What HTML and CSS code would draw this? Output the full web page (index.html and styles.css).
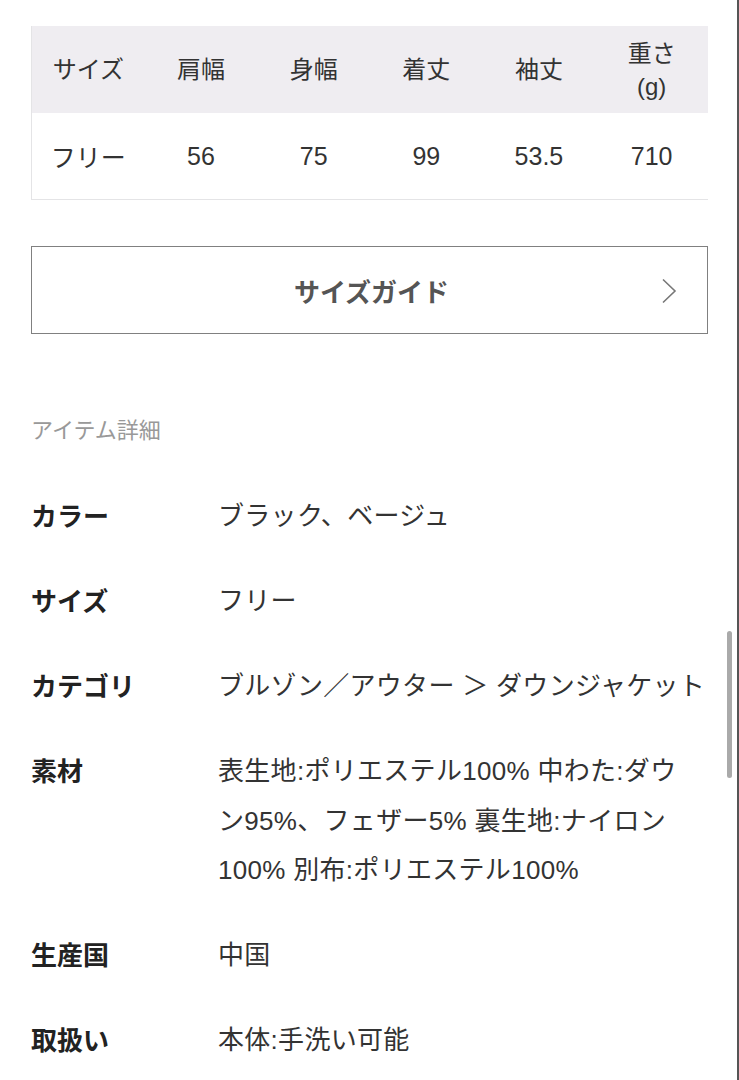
FILE: index.html
```html
<!DOCTYPE html>
<html lang="ja">
<head>
<meta charset="utf-8">
<meta name="viewport" content="width=device-width, initial-scale=1.0">
<title>アイテム詳細</title>
<link rel="stylesheet" href="styles.css">
</head>
<body>
<div id="wrapper">
  <div class="sizeTable">
    <table>
      <thead>
        <tr>
          <th>サイズ</th>
          <th>肩幅</th>
          <th>身幅</th>
          <th>着丈</th>
          <th>袖丈</th>
          <th>重さ<br>(g)</th>
        </tr>
      </thead>
      <tbody>
        <tr>
          <td>フリー</td>
          <td>56</td>
          <td>75</td>
          <td>99</td>
          <td>53.5</td>
          <td>710</td>
        </tr>
      </tbody>
    </table>
  </div>

  <a class="btnGuide" href="#">
    <span>サイズガイド</span>
    <svg class="arrow" width="16" height="26" viewBox="0 0 16 26">
      <path d="M2 1.5 L14 13 L2 24.5" fill="none" stroke="#777" stroke-width="1.6"/>
    </svg>
  </a>

  <h2 class="detailTitle">アイテム詳細</h2>

  <dl class="detailList">
    <div class="detailRow">
      <dt>カラー</dt>
      <dd>ブラック、ベージュ</dd>
    </div>
    <div class="detailRow">
      <dt>サイズ</dt>
      <dd>フリー</dd>
    </div>
    <div class="detailRow">
      <dt>カテゴリ</dt>
      <dd>ブルゾン／アウター ＞ ダウンジャケット</dd>
    </div>
    <div class="detailRow">
      <dt>素材</dt>
      <dd>表生地:ポリエステル100% 中わた:ダウ<br>ン95%、フェザー5% 裏生地:ナイロン<br>100% 別布:ポリエステル100%</dd>
    </div>
    <div class="detailRow">
      <dt>生産国</dt>
      <dd>中国</dd>
    </div>
    <div class="detailRow">
      <dt>取扱い</dt>
      <dd>本体:手洗い可能</dd>
    </div>
  </dl>
</div>
<div class="scrollBar"></div>
</body>
</html>
```

FILE: styles.css
```css
html,body {
  margin: 0;
  padding: 0;
  background: #fff;
  font-family: "Liberation Sans", "Noto Sans CJK JP", sans-serif;
  color: #333;
}
body {
  border-right: 2px solid #555;
  min-height: 1080px;
  box-sizing: border-box;
  overflow: hidden;
}
#wrapper {
  padding: 26px 29px 0 31px;
}
/* サイズ表 */
.sizeTable {
  border-left: 1px solid #e4e4e6;
  border-bottom: 1px solid #e4e4e6;
  overflow: hidden;
}
.sizeTable table {
  width: 100%;
  border-collapse: collapse;
  table-layout: fixed;
}
.sizeTable th,.sizeTable td {
  text-align: center;
  font-weight: normal;
  font-size: 24px;
  color: #333;
  padding: 0;
}
.sizeTable th {
  background: #efedf1;
  height: 87px;
  line-height: 33px;
}
.sizeTable td {
  height: 86px;
  font-size: 25px;
}
/* サイズガイドボタン */
.btnGuide {
  display: flex;
  align-items: center;
  justify-content: center;
  position: relative;
  height: 88px;
  margin-top: 46px;
  border: 1.5px solid #808080;
  box-sizing: border-box;
  text-decoration: none;
  color: #555;
  font-size: 26px;
  font-weight: bold;
  padding-left: 4px;
}
.btnGuide .arrow {
  position: absolute;
  right: 30px;
  top: 31px;
}
/* アイテム詳細 */
.detailTitle {
  margin: 82px 0 0 0;
  font-size: 22px;
  font-weight: normal;
  color: #999;
  line-height: 30px;
}
.detailList {
  margin: 46px 0 0 0;
}
.detailRow {
  display: flex;
  margin-bottom: 35px;
}
.detailRow dt {
  width: 187px;
  flex-shrink: 0;
  font-size: 26px;
  font-weight: bold;
  color: #222;
  line-height: 50px;
}
.detailRow dd {
  margin: 0;
  font-size: 26px;
  color: #333;
  line-height: 49.5px;
  letter-spacing: 0.3px;
  white-space: nowrap;
}
.scrollBar {
  position: absolute;
  left: 727px;
  top: 631px;
  width: 5px;
  height: 147px;
  border-radius: 3px;
  background: #aaa;
}
```
